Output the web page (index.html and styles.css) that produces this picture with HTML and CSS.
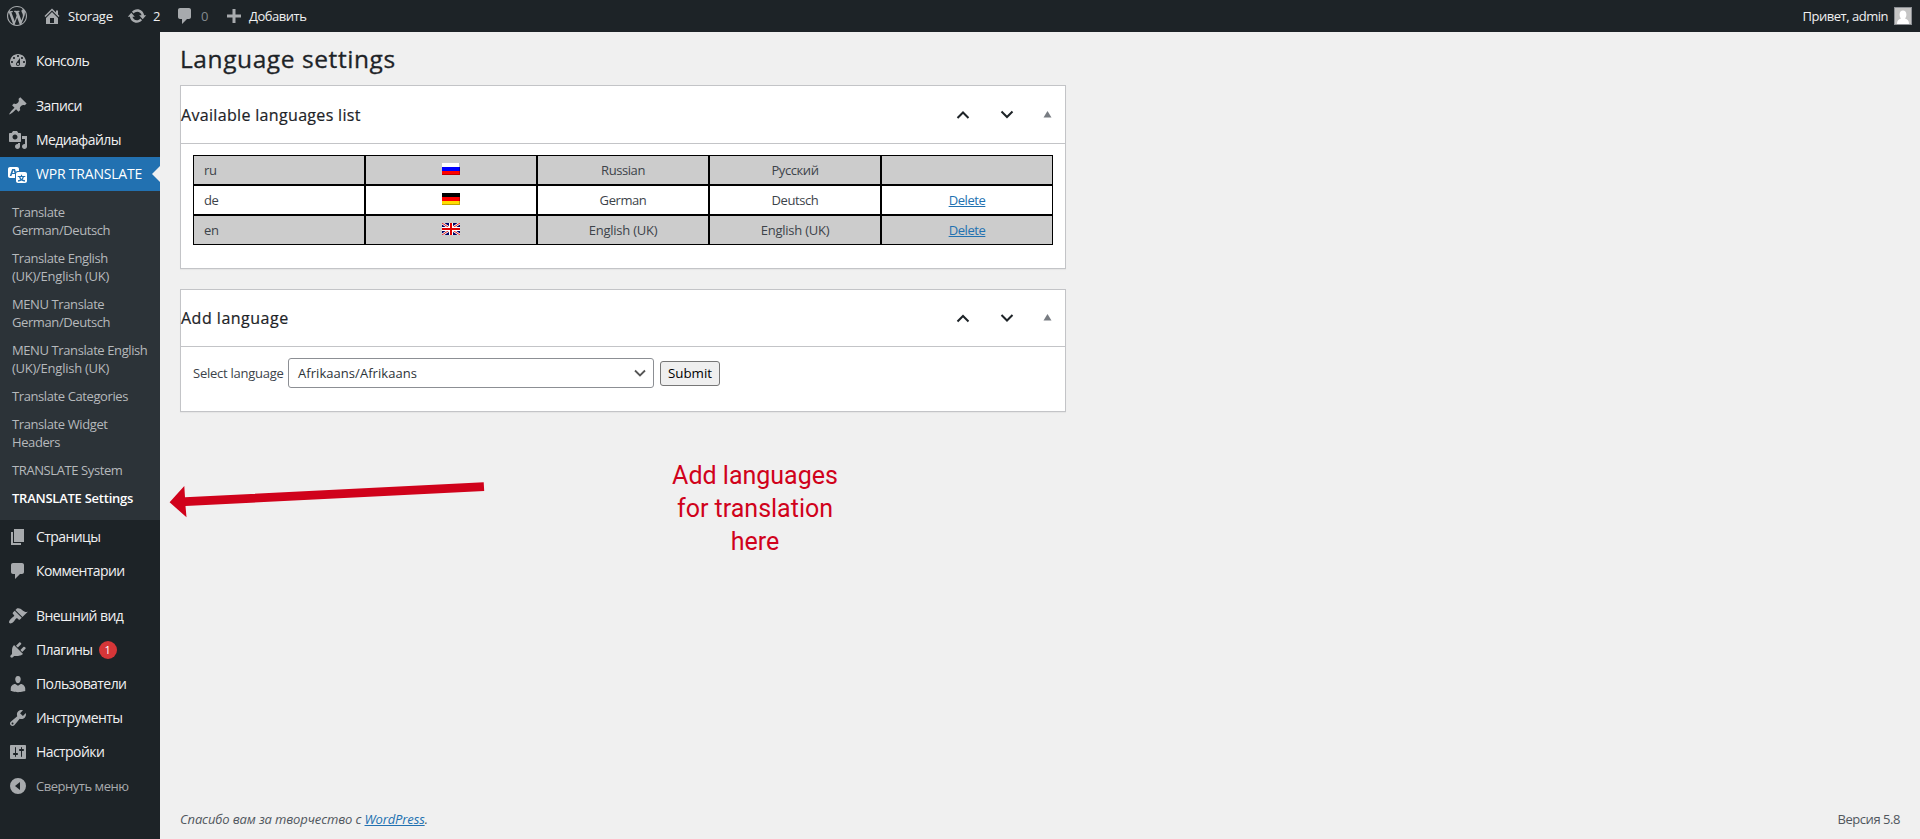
FILE: index.html
```html
<!DOCTYPE html>
<html lang="ru">
<head>
<meta charset="utf-8">
<title>Language settings</title>
<link rel="stylesheet" href="styles.css">
</head>
<body>
<header class="adminbar">
  <div class="bar-item bar-logo"><svg class="icon" viewBox="0 0 20 20"><path d="M20 10c0-5.51-4.49-10-10-10C4.48 0 0 4.49 0 10c0 5.52 4.48 10 10 10 5.51 0 10-4.48 10-10zM7.78 15.37L4.37 6.22c.55-.02 1.17-.08 1.17-.08.5-.06.44-1.13-.06-1.11 0 0-1.45.11-2.37.11-.18 0-.37 0-.58-.01C4.12 2.69 6.87 1.11 10 1.11c2.33 0 4.45.87 6.05 2.34-.68-.11-1.65.39-1.65 1.58 0 .74.45 1.36.9 2.1.35.61.55 1.36.55 2.46 0 1.49-1.4 5-1.4 5l-3.03-8.37c.54-.02.82-.17.82-.17.5-.05.44-1.25-.06-1.22 0 0-1.44.12-2.38.12-.87 0-2.33-.12-2.33-.12-.5-.03-.56 1.2-.06 1.22l.92.08 1.26 3.41zM17.41 10c.24-.64.74-1.87.43-4.25.7 1.29 1.05 2.71 1.05 4.25 0 3.29-1.73 6.24-4.4 7.78.97-2.59 1.94-5.2 2.92-7.78zM6.1 18.09C3.12 16.65 1.11 13.53 1.11 10c0-1.3.23-2.48.72-3.59C3.25 10.3 4.67 14.2 6.1 18.09zm4.03-6.63l2.58 6.98c-.86.29-1.76.45-2.71.45-.79 0-1.57-.11-2.29-.33.81-2.38 1.62-4.74 2.42-7.1z"/></svg></div>
  <div class="bar-item bar-site"><svg class="icon" viewBox="0 0 20 20"><path d="M16 8.5l1.53 1.53-1.06 1.06L10 4.6l-6.47 6.49-1.06-1.06L10 2.5l4 4v-2h2v4zm-6-2.46l6 5.99V18H4v-5.97zM12 17v-5H8v5h4z"/></svg><span>Storage</span></div>
  <div class="bar-item bar-updates"><svg class="icon" viewBox="0 0 20 20"><path d="M10.2 3.28c3.53 0 6.43 2.61 6.92 6h2.08l-3.5 4-3.5-4h2.32c-.45-1.97-2.21-3.45-4.32-3.45-1.45 0-2.73.71-3.54 1.78L4.95 5.66C6.23 4.2 8.11 3.28 10.2 3.28zm-.4 13.44c-3.52 0-6.43-2.61-6.92-6H.8l3.5-4c1.17 1.33 2.33 2.67 3.5 4H5.48c.45 1.97 2.21 3.45 4.32 3.45 1.45 0 2.73-.71 3.54-1.78l1.71 1.95c-1.28 1.46-3.15 2.38-5.25 2.38z"/></svg><span>2</span></div>
  <div class="bar-item bar-comments"><svg class="icon" viewBox="0 0 20 20"><path d="M5 2h9c1.1 0 2 .9 2 2v7c0 1.1-.9 2-2 2h-2l-5 5v-5H5c-1.1 0-2-.9-2-2V4c0-1.1.9-2 2-2z"/></svg><span class="muted">0</span></div>
  <div class="bar-item bar-new"><svg class="icon" viewBox="0 0 20 20"><path d="M17 8.5v3h-5.500V17h-3v-5.500H3v-3h5.500V3h3v5.500z"/></svg><span class="cyr">Добавить</span></div>
  <div class="bar-item bar-user"><span class="cyr">Привет, admin</span><svg class="avatar" viewBox="0 0 18 18"><rect width="18" height="18" fill="#8c8f94"/><rect x="1" y="1" width="16" height="16" fill="#c5c5c5"/><path d="M3 17c0-3.500 1.500-5 4-5.600C5.800 10.500 5.600 9 5.600 7.600 5.600 5.200 7 3.600 9 3.600s3.400 1.600 3.400 4c0 1.400-.2 2.900-1.400 3.800 2.500.6 4 2.100 4 5.600z" fill="#fff"/></svg></div>
</header>
<div class="wrap">
  <nav class="menu">
    <a class="item"><svg class="icon" viewBox="0 0 20 20"><path fill-rule="evenodd" d="M3.760 16h12.480c1.100-1.370 1.760-3.110 1.760-5 0-4.420-3.580-8-8-8s-8 3.580-8 8c0 1.890.66 3.630 1.760 5zM10 4c.55 0 1 .45 1 1s-.45 1-1 1-1-.45-1-1 .45-1 1-1zM6 6c.55 0 1 .45 1 1s-.45 1-1 1-1-.45-1-1 .45-1 1-1zm8 0c.55 0 1 .45 1 1s-.45 1-1 1-1-.45-1-1 .45-1 1-1zm-5.370 5.550L12 7v6c0 1.100-.9 2-2 2s-2-.9-2-2c0-.57.24-1.080.63-1.450zM4 10c.55 0 1 .45 1 1s-.45 1-1 1-1-.45-1-1 .45-1 1-1zm12 0c.55 0 1 .45 1 1s-.45 1-1 1-1-.45-1-1 .45-1 1-1zm-5 3c0-.55-.45-1-1-1s-1 .45-1 1 .45 1 1 1 1-.45 1-1z"/></svg><span>Консоль</span></a>
    <div class="sep"></div>
    <a class="item"><svg class="icon" viewBox="0 0 20 20"><path d="M10.440 3.020l1.820-1.820 6.360 6.350-1.830 1.820c-1.050-.68-2.480-.57-3.410.36l-.75.75c-.92.93-1.040 2.350-.35 3.410l-1.830 1.820-2.410-2.410-2.800 2.790c-.42.42-3.380 2.710-3.800 2.290s1.860-3.390 2.280-3.810l2.790-2.790L4.100 9.360l1.830-1.820c1.050.69 2.480.57 3.400-.36l.75-.75c.93-.92 1.050-2.350.36-3.410z"/></svg><span>Записи</span></a>
    <a class="item"><svg class="icon" viewBox="0 0 20 20"><path fill-rule="evenodd" d="M13 11V4c0-.55-.45-1-1-1h-1.670L9 1H5L3.670 3H2c-.55 0-1 .45-1 1v7c0 .55.45 1 1 1h10c.55 0 1-.45 1-1zM7 4.500c1.380 0 2.500 1.120 2.500 2.500S8.380 9.500 7 9.500 4.500 8.380 4.500 7 5.620 4.500 7 4.500zM14 6h5v10.500c0 1.380-1.120 2.500-2.500 2.500S14 17.880 14 16.500s1.120-2.500 2.500-2.500c.17 0 .34.02.5.05V9h-3V6zm-4 8.050V13h2v3.500c0 1.380-1.120 2.500-2.500 2.500S7 17.880 7 16.500 8.120 14 9.500 14c.17 0 .34.02.5.05z"/></svg><span>Медиафайлы</span></a>
    <a class="item current"><svg class="icon" viewBox="0 0 20 20"><path fill-rule="evenodd" d="M11 7H9.490c-.63 0-1.250.3-1.590.7L7 5H4.130l-2.390 7h1.690l.74-2H7v4H2c-1.100 0-2-.9-2-2V5c0-1.100.9-2 2-2h7c1.100 0 2 .9 2 2v2zM6.510 9H4.490l1-2.930zM10 8h7c1.100 0 2 .9 2 2v7c0 1.100-.9 2-2 2h-7c-1.100 0-2-.9-2-2v-7c0-1.100.9-2 2-2zm7.250 5v-1.080h-3.170V10.750h-1.160v1.170H9.750V13h1.280c.11.85.56 1.850 1.280 2.620-.87.36-1.890.62-2.310.62-.01.02.22.97.2 1.460.84 0 2.210-.5 3.280-1.150 1.090.65 2.480 1.150 3.340 1.150-.02-.49.2-1.440.2-1.460-.43 0-1.490-.27-2.380-.63.7-.77 1.140-1.770 1.250-2.610h1.360zm-3.810 1.930c-.5-.46-.85-1.130-1.010-1.930h2.090c-.17.8-.51 1.470-1 1.930l-.04.03s-.03-.02-.04-.03z"/></svg><span>WPR TRANSLATE</span></a>
    <div class="submenu">
      <a class="sub">Translate<br>German/Deutsch</a>
      <a class="sub">Translate English<br><span class="wide">(UK)/English (UK)</span></a>
      <a class="sub">MENU Translate<br>German/Deutsch</a>
      <a class="sub">MENU Translate English<br><span class="wide">(UK)/English (UK)</span></a>
      <a class="sub">Translate Categories</a>
      <a class="sub">Translate Widget<br>Headers</a>
      <a class="sub">TRANSLATE System</a>
      <a class="sub active">TRANSLATE Settings</a>
    </div>
    <a class="item"><svg class="icon" viewBox="0 0 20 20"><path d="M6 15V2h10v13H6zm-1 1h8v2H3V5h2v11z"/></svg><span>Страницы</span></a>
    <a class="item"><svg class="icon" viewBox="0 0 20 20"><path d="M5 2h9c1.100 0 2 .9 2 2v7c0 1.100-.9 2-2 2h-2l-5 5v-5H5c-1.100 0-2-.9-2-2V4c0-1.100.9-2 2-2z"/></svg><span>Комментарии</span></a>
    <div class="sep"></div>
    <a class="item"><svg class="icon" viewBox="0 0 20 20"><path d="M14.480 11.060L7.410 3.990l1.500-1.500c.5-.56 2.300-.47 3.510.32 1.210.8 1.430 1.280 2.910 2.100 1.180.64 2.450 1.260 4.450.85zm-.71.71L6.700 4.700 4.930 6.470c-.39.39-.39 1.020 0 1.410l1.060 1.060c.39.39.39 1.030 0 1.420-.6.6-1.430 1.110-2.210 1.690-.35.26-.7.53-1.010.84C1.430 14.230.4 16.080 1.400 17.070c.99 1 2.840-.03 4.180-1.360.31-.31.58-.66.85-1.020.57-.78 1.080-1.610 1.690-2.210.39-.39 1.020-.39 1.410 0l1.060 1.060c.39.39 1.020.39 1.410 0z"/></svg><span>Внешний вид</span></a>
    <a class="item"><svg class="icon" viewBox="0 0 20 20"><path d="M13.110 4.360L9.870 7.600 8 5.730l3.240-3.240c.35-.34 1.050-.2 1.560.32.52.51.66 1.210.31 1.550zm-8 1.770l.91-1.120 9.010 9.010-1.190.84c-.71.71-2.630 1.160-3.820 1.160H6.140L4.900 17.260c-.59.59-1.540.59-2.120 0-.59-.58-.59-1.530 0-2.120l1.240-1.240v-3.880c0-1.130.4-3.190 1.090-3.890zm7.260 3.970l3.240-3.240c.34-.35 1.040-.21 1.550.31.52.51.66 1.210.31 1.550l-3.240 3.250z"/></svg><span>Плагины</span><span class="badge">1</span></a>
    <a class="item"><svg class="icon" viewBox="0 0 20 20"><path d="M10 9.250c-2.270 0-2.730-3.440-2.730-3.440C7 4.020 7.820 2 9.970 2c2.160 0 2.980 2.020 2.710 3.810 0 0-.41 3.440-2.680 3.440zm0 2.570L12.720 10c2.390 0 4.520 2.330 4.520 4.530v2.490s-3.650 1.130-7.240 1.130c-3.650 0-7.240-1.130-7.240-1.130v-2.490c0-2.250 1.940-4.480 4.470-4.480z"/></svg><span>Пользователи</span></a>
    <a class="item"><svg class="icon" viewBox="0 0 20 20"><path fill-rule="evenodd" d="M16.680 9.770c-1.340 1.340-3.300 1.670-4.950.99l-5.410 6.520c-.99.99-2.590.99-3.580 0s-.99-2.590 0-3.570l6.520-5.420c-.68-1.650-.35-3.610.99-4.950 1.280-1.280 3.120-1.620 4.720-1.060l-2.890 2.890 2.820 2.820 2.860-2.870c.53 1.580.18 3.390-1.080 4.650zM3.810 16.210c.4.39 1.040.39 1.430 0 .4-.4.4-1.040 0-1.430-.39-.4-1.030-.4-1.430 0-.39.39-.39 1.030 0 1.430z"/></svg><span>Инструменты</span></a>
    <a class="item"><svg class="icon" viewBox="0 0 20 20"><path fill-rule="evenodd" d="M18 16V4c0-.55-.45-1-1-1H3c-.55 0-1 .45-1 1v12c0 .55.45 1 1 1h14c.55 0 1-.45 1-1zM8 11h1c.55 0 1 .45 1 1s-.45 1-1 1H8v1.500c0 .28-.22.5-.5.5s-.5-.22-.5-.5V13H6c-.55 0-1-.45-1-1s.45-1 1-1h1V5.500c0-.28.22-.5.5-.5s.5.22.5.5V11zm5-2h-1c-.55 0-1-.45-1-1s.45-1 1-1h1V5.500c0-.28.22-.5.5-.5s.5.22.5.5V7h1c.55 0 1 .45 1 1s-.45 1-1 1h-1v5.500c0 .28-.22.5-.5.5s-.5-.22-.5-.5V9z"/></svg><span>Настройки</span></a>
    <a class="item collapse"><svg class="icon" viewBox="0 0 20 20"><path fill-rule="evenodd" d="M10 2a8 8 0 1 0 0 16 8 8 0 0 0 0-16zM12 6v8L7 10z"/></svg><span>Свернуть меню</span></a>
  </nav>
  <div class="content">
    <h1 class="title">Language settings</h1>
    <section class="box">
      <div class="box-head"><h2 class="box-title">Available languages list</h2>
        <svg class="handles" viewBox="0 0 110 16"><path class="chev" d="M7.500 11l5.500-5.500 5.500 5.500M51.500 4.500l5.500 5.500 5.500-5.500"/><path class="tri" d="M93.500 10.500h8l-4-6.500z"/></svg></div>
      <div class="box-body">
        <div class="grid">
          <div class="cell odd left">ru</div>
          <div class="cell odd"><svg class="flag" viewBox="0 0 18 12"><path fill="#fff" d="M0 0h18v4H0z"/><path fill="#00f" d="M0 4h18v4H0z"/><path fill="#f00" d="M0 8h18v4H0z"/><path class="shade" d="M0 11.500h17.500V0"/></svg></div>
          <div class="cell odd">Russian</div><div class="cell odd">Русский</div><div class="cell odd"></div>
          <div class="cell left">de</div>
          <div class="cell"><svg class="flag" viewBox="0 0 18 12"><path fill="#000" d="M0 0h18v4H0z"/><path fill="#f00" d="M0 4h18v4H0z"/><path fill="#fd0" d="M0 8h18v4H0z"/><path class="shade" d="M0 11.500h17.500V0"/></svg></div>
          <div class="cell">German</div><div class="cell">Deutsch</div><div class="cell"><a class="link">Delete</a></div>
          <div class="cell odd left">en</div>
          <div class="cell odd"><svg class="flag" viewBox="0 0 18 12"><path fill="#006" d="M0 0h18v12H0z"/><path stroke="#fff" stroke-width="2.600" d="M0 0l18 12M18 0L0 12"/><path stroke="#e00000" stroke-width=".9" d="M0 0l18 12M18 0L0 12"/><path stroke="#fff" stroke-width="4" d="M9 0v12M0 6h18"/><path stroke="#e00000" stroke-width="2" d="M9 0v12M0 6h18"/></svg></div>
          <div class="cell odd"><span class="wide">English (UK)</span></div><div class="cell odd"><span class="wide">English (UK)</span></div><div class="cell odd"><a class="link">Delete</a></div>
        </div>
      </div>
    </section>
    <section class="box second">
      <div class="box-head"><h2 class="box-title">Add language</h2>
        <svg class="handles" viewBox="0 0 110 16"><path class="chev" d="M7.500 11.500l5.500-5.500 5.500 5.500M51.500 5l5.500 5.500L62.500 5"/><path class="tri" d="M93.500 10.500h8l-4-6.500z"/></svg></div>
      <div class="box-body form">
        <label class="label">Select language</label>
        <div class="select"><span>Afrikaans/Afrikaans</span><svg class="caret" viewBox="0 0 16 16"><path d="M3 5.500l5 5 5-5"/></svg></div>
        <button class="submit">Submit</button>
      </div>
    </section>
    <div class="note">Add languages<br>for translation<br>here</div>
    <footer class="footer"><span class="thanks">Спасибо вам за творчество с <a class="link">WordPress</a>.</span><span class="version">Версия 5.8</span></footer>
  </div>
</div>
<svg class="arrow" viewBox="0 0 320 36"><path fill="#d0021b" d="M1.600 18.300L16.300 2l.7 11.300L315.700-1.700l.5 8.700L17.500 22l1 11.300z"/></svg>
</body>
</html>
```
FILE: styles.css
```css
* { box-sizing: border-box; }
body {
  margin: 0;
  height: 839px;
  overflow: hidden;
  background: #f0f0f0;
  color: #3c434a;
  font: 13px/18px "Open Sans", "Noto Sans", sans-serif;
}
.adminbar {
  display: flex;
  height: 32px;
  background: #1d2327;
  color: #f0f0f1;
  line-height: 32px;
  letter-spacing: -.25px;
}
.bar-item { display: flex; align-items: center; flex: none; }
.bar-logo { padding-left: 7px; width: 42px; }
.bar-site { gap: 6px; width: 85px; }
.bar-updates { gap: 6px; width: 48px; }
.bar-comments { gap: 6px; width: 49px; }
.bar-new { gap: 5px; }
.bar-user { gap: 6px; margin-left: auto; padding-right: 8px; }
.cyr { letter-spacing: -.48px; }
.muted { color: #9ca2a7; opacity: .8; }
.icon { display: block; flex: none; width: 20px; height: 20px; fill: #a7aaad; }
.avatar { width: 18px; height: 18px; }
.wrap { display: flex; height: 807px; }
.menu { width: 160px; flex: none; padding-top: 12px; background: #1d2327; }
.item {
  display: flex;
  align-items: center;
  gap: 8px;
  height: 34px;
  padding-left: 8px;
  color: #f0f0f1;
  font-size: 14px;
  letter-spacing: -.57px;
}
.sep { height: 11px; }
.current { position: relative; background: #2271b1; color: #fff; letter-spacing: -.2px; }
.current .icon { fill: #fff; }
.current::after {
  content: "";
  position: absolute;
  right: 0;
  top: 9px;
  border: 8px solid transparent;
  border-left: 0;
  border-right-color: #f0f0f0;
}
.collapse { color: #a7aaad; font-size: 13px; letter-spacing: -.47px; }
.badge {
  width: 18px;
  height: 18px;
  margin-left: -2px;
  border-radius: 9px;
  background: #d63638;
  color: #fff;
  font-size: 11px;
  line-height: 18px;
  letter-spacing: 0;
  text-align: center;
}
.submenu { padding: 7px 0 8px; background: #2c3338; color: #b6b9bc; letter-spacing: -.4px; }
.sub { display: block; padding: 5px 0 5px 12px; white-space: nowrap; }
.wide { letter-spacing: -.25px; }
.active { color: #fff; font-weight: 600; letter-spacing: -.25px; }
.content { display: flex; flex-direction: column; flex: 1; padding: 0 20px; }
.title {
  margin: 0;
  height: 53px;
  padding-top: 9px;
  color: #1d2327;
  font-size: 24.5px;
  font-weight: 400;
  line-height: 36px;
  letter-spacing: .58px;
  -webkit-text-stroke: .3px #1d2327;
}
.box { width: 886px; height: 184px; border: 1px solid #c3c4c7; background: #fff; box-shadow: 0 1px 1px rgba(0,0,0,.04); }
.second { height: 123px; margin-top: 20px; }
.box-head { display: flex; align-items: center; justify-content: space-between; height: 58px; border-bottom: 1px solid #c3c4c7; }
.second .box-head { height: 57px; }
.box-title {
  margin: 0;
  color: #1d2327;
  font-size: 16px;
  font-weight: 400;
  letter-spacing: .33px;
  -webkit-text-stroke: .2px #1d2327;
}
.second .box-title { letter-spacing: .5px; }
.handles { width: 110px; height: 16px; margin-right: 5px; }
.chev { fill: none; stroke: #1d2327; stroke-width: 2; }
.tri { fill: #787c82; }
.box-body { padding: 11px 12px; }
.grid { display: grid; grid-template-columns: repeat(5, 172px); grid-auto-rows: 30px; letter-spacing: -.42px; }
.cell { display: flex; align-items: center; justify-content: center; border: 1px solid #000; }
.left { justify-content: flex-start; padding-left: 10px; }
.odd { background: #ccc; }
.flag { width: 18px; height: 12px; margin-bottom: 2px; }
.shade { fill: none; stroke: #000; stroke-opacity: .25; }
.link { color: #2271b1; text-decoration: underline; }
.form { display: flex; align-items: center; height: 52px; }
.label { width: 95px; letter-spacing: -.25px; }
.select {
  display: flex;
  align-items: center;
  justify-content: space-between;
  width: 366px;
  height: 30px;
  padding: 0 5px 0 9px;
  border: 1px solid #8c8f94;
  border-radius: 3px;
  color: #2c3338;
  letter-spacing: .05px;
}
.caret { width: 16px; height: 16px; fill: none; stroke: #555; stroke-width: 1.8; }
.submit {
  width: 60px;
  height: 25px;
  margin-left: 6px;
  padding: 0;
  border: 1px solid #767676;
  border-radius: 3px;
  background: #efefef;
  color: #000;
  font: 13.33px/22px "Open Sans", sans-serif;
}
.note {
  align-self: flex-start;
  width: 300px;
  margin: 47px 0 0 425px;
  color: #d0021b;
  font: 25px/33px Roboto, sans-serif;
  text-align: center;
}
.footer { display: flex; justify-content: space-between; margin-top: auto; padding-bottom: 11px; color: #50575e; }
.thanks { font-style: italic; letter-spacing: -.12px; }
.version { letter-spacing: -.45px; }
.arrow { position: absolute; left: 168px; top: 484px; width: 320px; height: 36px; overflow: visible; }
```
